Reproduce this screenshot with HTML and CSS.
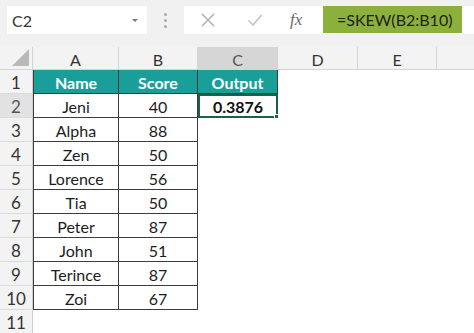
FILE: index.html
```html
<!DOCTYPE html>
<html>
<head>
<meta charset="utf-8">
<link rel="stylesheet" href="styles.css">
</head>
<body>
<div class="topbar">
  <div class="namebox"><span class="nb-text">C2</span><span class="nb-arrow"></span></div>
  <div class="sep"><i></i><i></i><i></i></div>
  <div class="formula">
    <div class="tools">
      <svg class="ico-x" width="16" height="16" viewBox="0 0 16 16"><path d="M2 2 L14 14 M14 2 L2 14" stroke="#b3b3b3" stroke-width="1.6" fill="none"/></svg>
      <svg class="ico-ok" width="16" height="14" viewBox="0 0 16 14"><path d="M1.5 7.5 L6 12 L14.5 2" stroke="#c4c4c4" stroke-width="1.6" fill="none"/></svg>
      <span class="fx">fx</span>
    </div>
    <div class="fbox">=SKEW(B2:B10)</div>
  </div>
</div>
<div class="sheet">
  <div class="corner"><span class="tri"></span></div>
  <div class="ch">A</div>
  <div class="ch">B</div>
  <div class="ch sel">C</div>
  <div class="ch">D</div>
  <div class="ch">E</div>
  <div class="ch last"></div>

  <div class="rh">1</div>
  <div class="th first">Name</div>
  <div class="th">Score</div>
  <div class="th">Output</div>
  <div class="e"></div><div class="e"></div><div class="e"></div>

  <div class="rh rsel">2</div>
  <div class="td first">Jeni</div>
  <div class="td">40</div>
  <div class="out">0.3876<span class="handle"></span></div>
  <div class="e"></div><div class="e"></div><div class="e"></div>

  <div class="rh">3</div>
  <div class="td first">Alpha</div>
  <div class="td">88</div>
  <div class="e"></div><div class="e"></div><div class="e"></div><div class="e"></div>

  <div class="rh">4</div>
  <div class="td first">Zen</div>
  <div class="td">50</div>
  <div class="e"></div><div class="e"></div><div class="e"></div><div class="e"></div>

  <div class="rh">5</div>
  <div class="td first">Lorence</div>
  <div class="td">56</div>
  <div class="e"></div><div class="e"></div><div class="e"></div><div class="e"></div>

  <div class="rh">6</div>
  <div class="td first">Tia</div>
  <div class="td">50</div>
  <div class="e"></div><div class="e"></div><div class="e"></div><div class="e"></div>

  <div class="rh">7</div>
  <div class="td first">Peter</div>
  <div class="td">87</div>
  <div class="e"></div><div class="e"></div><div class="e"></div><div class="e"></div>

  <div class="rh">8</div>
  <div class="td first">John</div>
  <div class="td">51</div>
  <div class="e"></div><div class="e"></div><div class="e"></div><div class="e"></div>

  <div class="rh">9</div>
  <div class="td first">Terince</div>
  <div class="td">87</div>
  <div class="e"></div><div class="e"></div><div class="e"></div><div class="e"></div>

  <div class="rh">10</div>
  <div class="td first">Zoi</div>
  <div class="td">67</div>
  <div class="e"></div><div class="e"></div><div class="e"></div><div class="e"></div>

  <div class="rh">11</div>
  <div class="e"></div><div class="e"></div><div class="e"></div><div class="e"></div><div class="e"></div><div class="e"></div>
</div>
</body>
</html>
```

FILE: styles.css
```css
* { box-sizing: border-box; }
html, body { margin: 0; padding: 0; }
body {
  width: 474px;
  height: 333px;
  overflow: hidden;
  background: #f1f1f1;
  font-family: Lato, "Liberation Sans", sans-serif;
  color: #222;
}
.topbar {
  height: 47px;
  display: flex;
  align-items: flex-start;
  padding: 6px 0 0 7px;
}
.namebox {
  width: 140px;
  height: 28px;
  background: #fff;
  display: flex;
  align-items: center;
  justify-content: space-between;
  padding: 0 9px 0 5px;
}
.nb-text { font-size: 16px; color: #333; }
.nb-arrow {
  width: 0; height: 0;
  border-left: 3.5px solid transparent;
  border-right: 3.5px solid transparent;
  border-top: 3.5px solid #777;
}
.sep {
  width: 37px;
  height: 28px;
  display: flex;
  flex-direction: column;
  align-items: center;
  justify-content: center;
  gap: 3px;
}
.sep i {
  display: block;
  width: 3px;
  height: 3px;
  border-radius: 50%;
  background: #a9a9a9;
}
.formula {
  flex: 1;
  height: 28px;
  background: #fff;
  display: flex;
}
.tools {
  width: 139px;
  display: flex;
  align-items: center;
  padding-left: 16px;
}
.ico-ok { margin-left: 31px; }
.fx {
  margin-left: 27px;
  font-family: "Liberation Serif", serif;
  font-style: italic;
  font-size: 17px;
  color: #6a6a6a;
}
.fbox {
  width: 139px;
  height: 27px;
  background: #8cb03c;
  font-size: 16px;
  color: #222;
  display: flex;
  align-items: center;
  padding-left: 14px;
}
.sheet {
  display: grid;
  grid-template-columns: 33px 86px 79px 80px 80px 79px 1fr;
  grid-template-rows: 23px repeat(11, 24px);
  background: #fff;
}
.corner, .ch, .rh {
  background: #f3f3f3;
  color: #333;
  font-size: 16px;
  display: flex;
  align-items: center;
  justify-content: center;
}
.corner {
  position: relative;
  border-right: 1px solid #d4d4d4;
  border-bottom: 1px solid #d4d4d4;
}
.tri {
  position: absolute;
  right: 3px;
  bottom: 3px;
  width: 0; height: 0;
  border-left: 17px solid transparent;
  border-bottom: 17px solid #b9b9b9;
}
.ch {
  border-right: 1px solid #d4d4d4;
  border-bottom: 1px solid #d4d4d4;
  padding-top: 2px;
}
.ch.sel { background: #d6d6d6; color: #555; }
.ch.last { border-right: none; }
.rh {
  font-size: 17px;
  border-right: 1px solid #cfcfcf;
  border-bottom: 1px solid #dadada;
  padding-top: 1px;
}
.rh.rsel { background: #e2e2e2; color: #555; }
.th, .td, .out {
  font-size: 16px;
  display: flex;
  align-items: center;
  justify-content: center;
  border-right: 1px solid #3c3c3c;
  border-bottom: 1px solid #3c3c3c;
}
.first { border-left: 1px solid #3c3c3c; }
.th {
  background: #1a9e9a;
  color: #fff;
  font-weight: bold;
  padding-top: 1px;
}
.td { color: #1c1c1c; padding-top: 1px; }
.out {
  position: relative;
  font-weight: bold;
  color: #111;
  border: 2px solid #1b5f4d;
}
.handle {
  position: absolute;
  right: -3px;
  bottom: -3px;
  width: 5px;
  height: 5px;
  background: #1b5f4d;
  border: 1px solid #fff;
}
.e { background: #fff; }
```
